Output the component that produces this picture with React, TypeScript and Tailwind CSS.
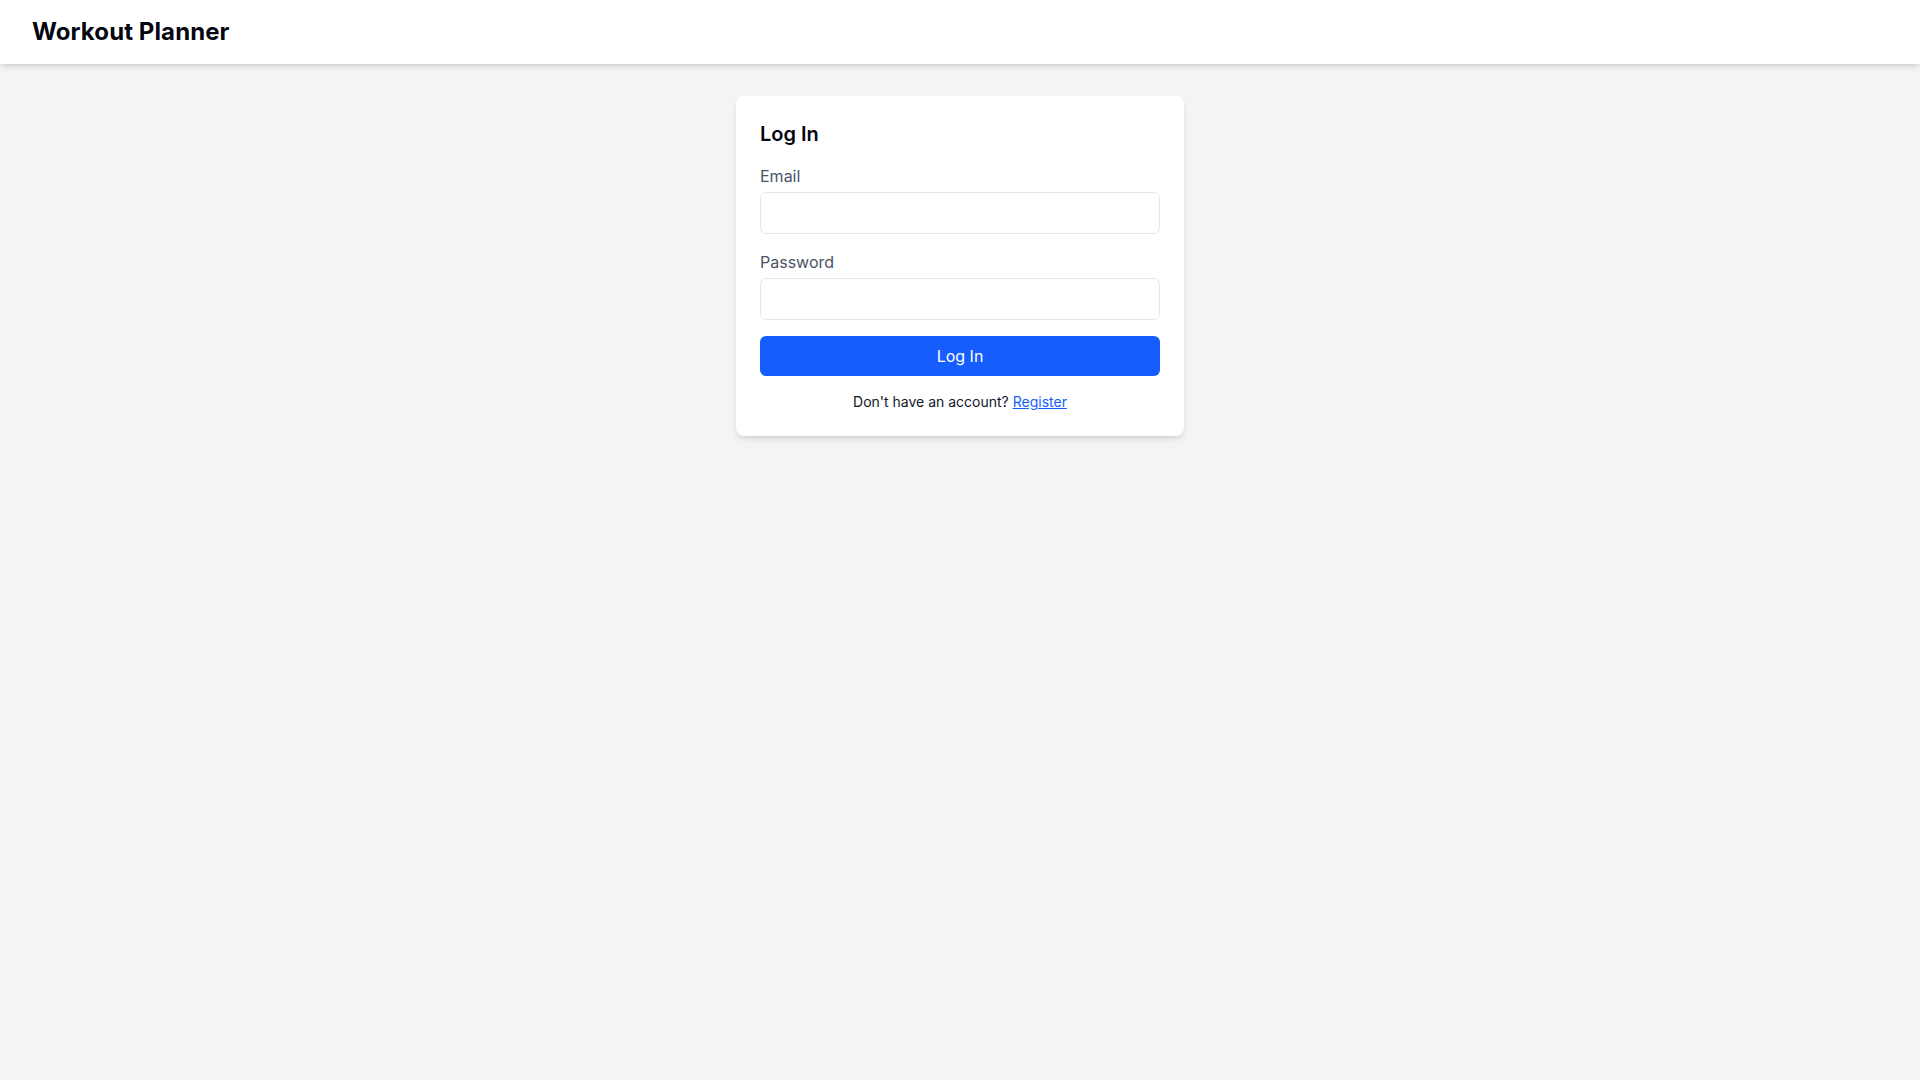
import React, { useState } from 'react';

export default function App() {
    const [email, setEmail] = useState('');
    const [password, setPassword] = useState('');

    return (
        <div className="min-h-screen bg-gray-100 font-['Inter',sans-serif]">
            <header className="bg-white shadow-md">
                <div className="px-8 py-4">
                    <h1 className="text-2xl font-bold tracking-[0.004em] text-gray-950">Workout Planner</h1>
                </div>
            </header>

            <main className="pt-8">
                <div className="mx-auto max-w-md rounded-lg bg-white p-6 shadow-md">
                    <h2 className="mb-4 text-xl font-semibold text-gray-950">Log In</h2>
                    <form onSubmit={(e) => e.preventDefault()}>
                        <div className="mb-4">
                            <label className="mb-1 block text-base text-gray-600">Email</label>
                            <input
                                type="email"
                                value={email}
                                onChange={(e) => setEmail(e.target.value)}
                                className="block w-full rounded-md border border-gray-200 px-3 py-2 text-base outline-none"
                            />
                        </div>
                        <div className="mb-4">
                            <label className="mb-1 block text-base text-gray-600">Password</label>
                            <input
                                type="password"
                                value={password}
                                onChange={(e) => setPassword(e.target.value)}
                                className="block w-full rounded-md border border-gray-200 px-3 py-2 text-base outline-none"
                            />
                        </div>
                        <button
                            type="submit"
                            className="block w-full rounded-md bg-blue-600 py-2 text-base text-white"
                        >
                            Log In
                        </button>
                    </form>
                    <p className="mt-4 text-center text-sm text-gray-900">
                        Don't have an account?{' '}
                        <a href="#" className="text-blue-600 underline">Register</a>
                    </p>
                </div>
            </main>
        </div>
    );
}
